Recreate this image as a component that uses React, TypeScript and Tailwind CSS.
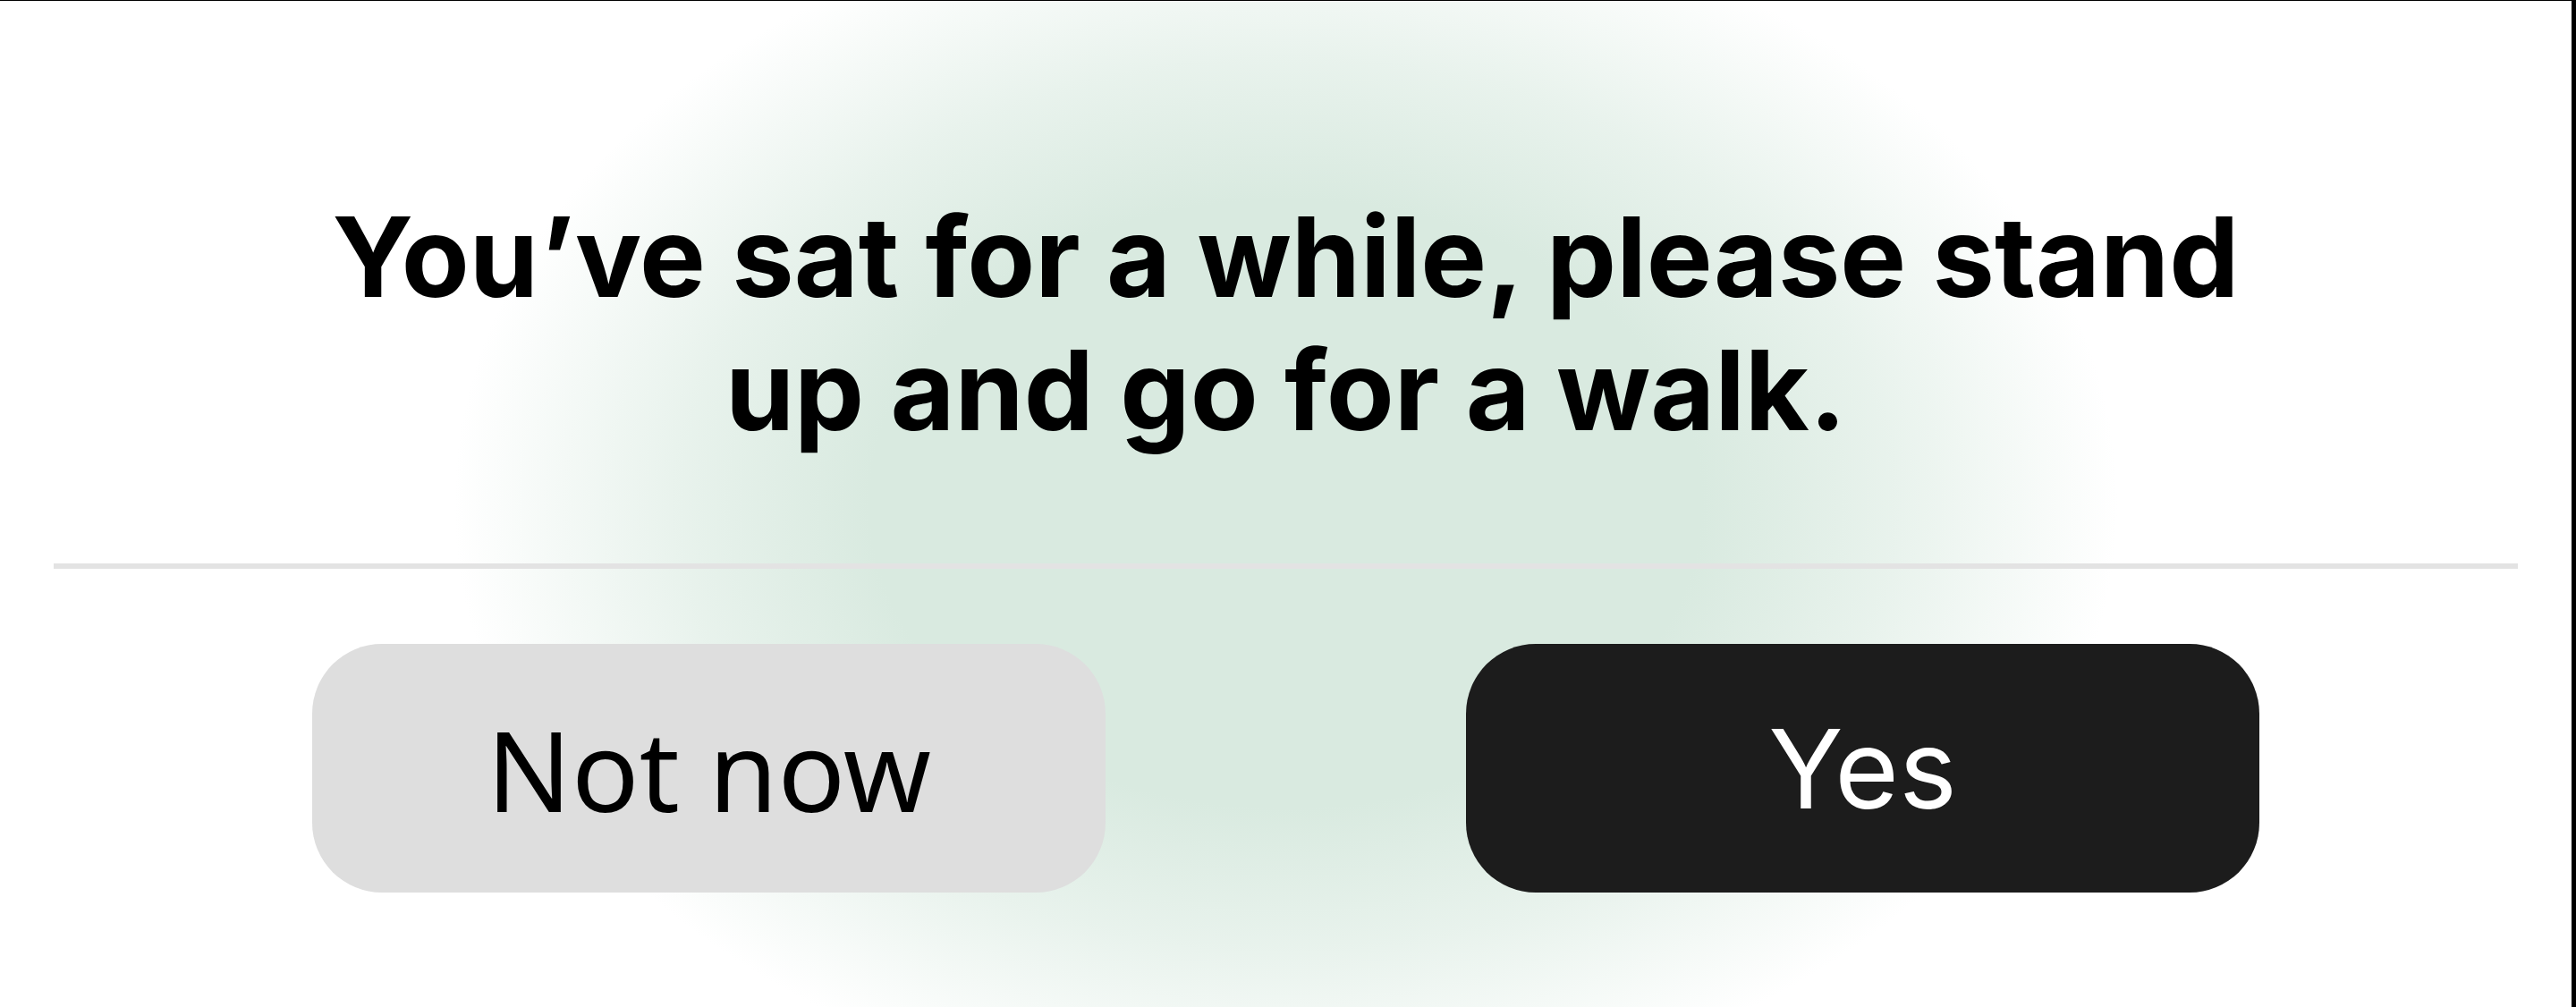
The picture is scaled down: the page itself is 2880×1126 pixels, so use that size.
import React from 'react';

interface PromptButtonProps {
  label: string;
  variant: 'secondary' | 'primary';
  onClick?: () => void;
}

function PromptButton({ label, variant, onClick }: PromptButtonProps) {
  const isPrimary = variant === 'primary';
  return (
    <button
      onClick={onClick}
      className={`w-[887px] h-[278px] rounded-[78px] flex items-center justify-center ${
        isPrimary
          ? "bg-[#1c1c1c] text-white font-['Inter',sans-serif] text-[123px]"
          : "bg-[#dedede] text-black font-['Noto_Sans',sans-serif] text-[125px]"
      }`}
    >
      <span className="leading-none">{label}</span>
    </button>
  );
}

export default function App() {
  return (
    <div className="w-full h-[1126px] overflow-hidden flex flex-col border-t border-r-[5px] border-black bg-white bg-[radial-gradient(ellipse_930px_680px_at_50%_50%,#d9eae0_0%,#d9eae0_50%,rgba(217,234,224,0.6)_73%,rgba(217,234,224,0)_100%)]">
      <h1 className="pt-[212px] text-center font-['Inter',sans-serif] font-bold text-[124px] leading-[149px] text-black">
        You’ve sat for a while, please stand
        <br />
        up and go for a walk.
      </h1>

      <div className="mx-[60px] mt-[119px] h-[6px] bg-[#e3e3e3]" />

      <div className="mt-[84px] px-[349px] flex justify-between">
        <PromptButton label="Not now" variant="secondary" />
        <PromptButton label="Yes" variant="primary" />
      </div>
    </div>
  );
}
